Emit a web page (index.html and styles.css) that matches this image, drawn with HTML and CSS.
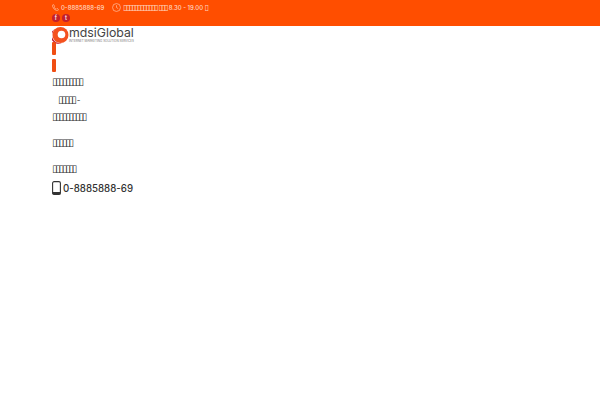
FILE: index.html
```html
<!DOCTYPE html>
<html lang="th">
  <head>
    <meta charset="UTF-8" />
    <meta name="viewport" content="width=device-width, initial-scale=1.0" />
    <title>mdsiGlobal</title>
    <link rel="stylesheet" href="styles.css">
  </head>
  <body>
    <div class="topbar">
      <div class="topbar-info">
        <span class="info-item">
          <svg class="info-icon" viewBox="0 0 16 16" width="7" height="7"><path d="M3 1 L6 5 L4.500 7 Q6 10.500 9.500 12 L11.500 10 L15 13 Q13 16 10 15 Q3 12 1 5 Q1 2 3 1 Z" fill="none" stroke="#ffc9ad" stroke-width="1.500"/></svg>
          0-8885888-69
        </span>
        <span class="info-item hours">
          <svg class="info-icon" viewBox="0 0 16 16" width="9" height="9"><circle cx="8" cy="8" r="7" fill="none" stroke="#ffc9ad" stroke-width="1.200"/><path d="M8 4 V8 L11 10" fill="none" stroke="#ffc9ad" stroke-width="1.200"/></svg>
          <span><span class="tofu small">▯▯▯▯▯▯▯▯▯▯▯▯</span> <span class="tofu small">▯▯▯</span> 8.30 - 19.00 <span class="tofu small">▯</span></span>
        </span>
      </div>
      <div class="social">
        <span class="social-btn">f</span>
        <span class="social-btn">t</span>
      </div>
    </div>

    <div class="brand">
      <div class="logo">
        <svg class="logo-mark" viewBox="0 0 17 18" width="17" height="18">
          <circle cx="8.500" cy="9" r="8" fill="#f4511e"/>
          <path d="M3 3 A8 8 0 0 0 10 17 A6.500 6.500 0 0 1 3 3 Z" fill="#c2182b"/>
          <circle cx="9.500" cy="8.500" r="3.800" fill="#fff"/>
        </svg>
        <div class="logo-text">
          <span class="logo-name">mdsiGlobal</span>
          <span class="logo-sub">INTERNET MARKETING SOLUTION SERVICES</span>
        </div>
      </div>
      <span class="brand-bar"></span>
      <span class="brand-bar second"></span>
    </div>

    <ul class="menu">
      <li class="first"><span class="tofu">▯▯▯▯▯▯▯▯▯</span></li>
      <li class="sub"><span class="tofu">▯▯▯▯▯</span> -</li>
      <li><span class="tofu">▯▯▯▯▯▯▯▯▯▯</span></li>
      <li class="gap"><span class="tofu">▯▯▯▯▯▯</span></li>
      <li class="gap"><span class="tofu">▯▯▯▯▯▯▯</span></li>
    </ul>

    <div class="call">
      <svg class="call-icon" viewBox="0 0 9 14" width="9" height="14"><rect x="0.600" y="0.600" width="7.800" height="12.800" rx="1.500" fill="none" stroke="#333" stroke-width="1.100"/><rect x="0.600" y="11" width="7.800" height="2.400" fill="#333"/></svg>
      0-8885888-69
    </div>
  </body>
</html>
```

FILE: styles.css
```css
body {
  margin: 0;
  background-color: #fff;
  color: #333;
  font-family: "Inter", sans-serif;
}

.tofu {
  font-family: "DejaVu Sans", sans-serif;
  font-weight: 400;
  font-size: 10px;
  letter-spacing: -2.200px;
}

.tofu.small {
  font-size: 8px;
  letter-spacing: -1.600px;
}

.topbar {
  background-color: #ff4e00;
  height: 26px;
  padding-left: 52px;
  color: #ffd9c4;
  font-size: 6px;
  font-weight: 500;
  box-sizing: border-box;
}

.topbar-info {
  display: flex;
  align-items: center;
  height: 14px;
}

.info-item {
  display: flex;
  align-items: center;
  gap: 2px;
}

.hours {
  margin-left: 8px;
}

.social {
  display: flex;
  gap: 2px;
}

.social-btn {
  width: 8px;
  height: 8px;
  border-radius: 50%;
  background-color: #c4202c;
  color: #fff;
  font-size: 6px;
  line-height: 8px;
  text-align: center;
}

.brand {
  padding-left: 52px;
  display: flex;
  flex-direction: column;
  align-items: flex-start;
}

.logo {
  display: flex;
  height: 18px;
}

.logo-mark {
  flex-shrink: 0;
}

.logo-text {
  display: flex;
  flex-direction: column;
}

.logo-name {
  font-size: 12.300px;
  line-height: 13px;
  color: #444;
  font-weight: 400;
}

.logo-sub {
  font-size: 3px;
  line-height: 4px;
  color: #777;
  white-space: nowrap;
}

.brand-bar {
  width: 4px;
  height: 13px;
  margin-top: -2px;
  background-color: #f04e13;
  border-radius: 1px;
}

.brand-bar.second {
  margin-top: 4px;
}

.menu {
  list-style: none;
  margin: 5px 0 0;
  padding: 0 0 0 52px;
  font-size: 8px;
  line-height: 10px;
}

.menu li {
  margin-bottom: 7px;
  height: 10px;
}

.menu .first {
  margin-bottom: 8px;
}

.menu .sub {
  padding-left: 6px;
}

.menu .gap {
  margin-top: 16px;
}

.call {
  display: flex;
  align-items: center;
  gap: 2px;
  padding-left: 52px;
  margin-top: 3px;
  font-size: 9.700px;
  font-weight: 500;
}
```
